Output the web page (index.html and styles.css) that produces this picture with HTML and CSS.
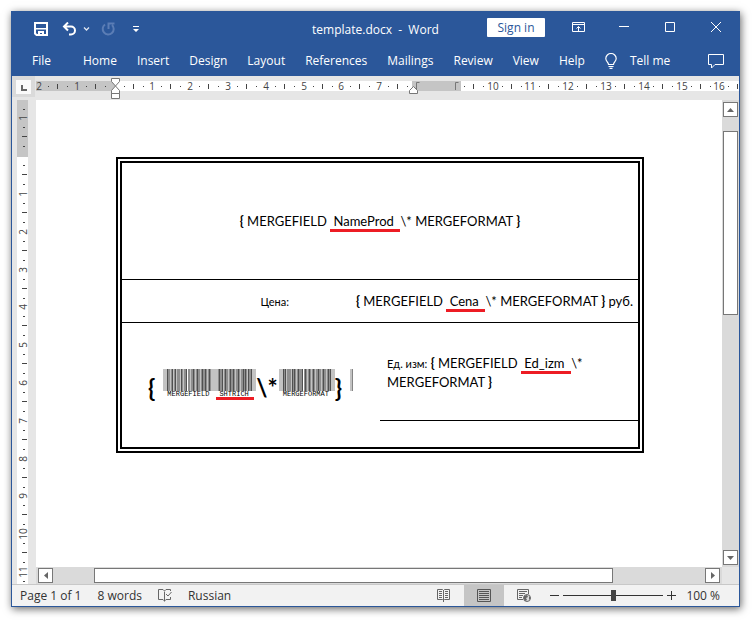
FILE: index.html
```html
<!DOCTYPE html>
<html lang="en">
<head>
<meta charset="utf-8">
<title>template.docx - Word</title>
<link rel="stylesheet" href="styles.css">
</head>
<body>
<div class="window">
  <header class="titlebar">
    <div class="quick">
      <button class="quick-btn" aria-label="Save"><svg width="14" height="14" viewBox="0 0 14 14"><path fill="none" stroke="#fff" stroke-width="2" d="M1 1h12v12H2.500L1 11.500z"/><path fill="#fff" d="M1 6h12v1.500H1zM4 9h6v4H8v-2H6v2H4z"/></svg></button>
      <button class="quick-btn" aria-label="Undo"><svg width="28" height="14" viewBox="0 0 28 14"><path fill="none" stroke="#fff" stroke-width="2" d="M6 .500L2 4.500l4 4M2 4.500h7a4 4 0 0 1 0 8H7"/><path fill="none" stroke="#dfe6f2" stroke-width="1.300" d="M22 5.500l2.500 2.500L27 5.500"/></svg></button>
      <button class="quick-btn repeat" aria-label="Repeat" disabled><svg width="14" height="14" viewBox="0 0 14 14"><path fill="none" stroke="#5b7db5" stroke-width="2" d="M4 2.500A5.500 5.500 0 1 0 11 3M7.500 7V1.500h6"/></svg></button>
      <button class="quick-btn customize" aria-label="Customize toolbar"><svg width="6" height="8" viewBox="0 0 6 8"><path fill="#fff" d="M0 1h6v1H0zM0 4h6L3 7z"/></svg></button>
    </div>
    <div class="doc-title">template.docx&nbsp; -&nbsp; Word</div>
    <div class="controls">
      <button class="signin">Sign in</button>
      <button class="control" aria-label="Ribbon options"><svg width="13" height="10" viewBox="0 0 13 10"><path fill="none" stroke="#fff" d="M.500.500h12v9H.500zM0 2.500h13M6.500 9V4.500M4.500 6.500l2-2 2 2"/></svg></button>
      <button class="control" aria-label="Minimize"><svg width="10" height="10" viewBox="0 0 10 10"><path stroke="#fff" d="M0 4.500h10"/></svg></button>
      <button class="control" aria-label="Maximize"><svg width="10" height="10" viewBox="0 0 10 10"><path fill="none" stroke="#fff" d="M.500.500h9v9h-9z"/></svg></button>
      <button class="control" aria-label="Close"><svg width="10" height="10" viewBox="0 0 10 10"><path stroke="#fff" d="M0 0l10 10M10 0L0 10"/></svg></button>
    </div>
  </header>
  <nav class="tabs">
    <button class="tab file">File</button>
    <button class="tab">Home</button>
    <button class="tab">Insert</button>
    <button class="tab">Design</button>
    <button class="tab">Layout</button>
    <button class="tab">References</button>
    <button class="tab">Mailings</button>
    <button class="tab">Review</button>
    <button class="tab">View</button>
    <button class="tab">Help</button>
    <button class="tab tell"><svg width="12" height="16" viewBox="0 0 12 16"><path fill="none" stroke="#fff" stroke-width="1.200" d="M3.500 11.500C3.500 9 .800 8.500.800 5.500a5.200 5 0 0 1 10.400 0c0 3-2.700 3.500-2.700 6zM3.500 13.500h5M4.500 15.400h3"/></svg>Tell me</button>
    <button class="tab comment" aria-label="Comments"><svg width="16" height="15" viewBox="0 0 16 15"><path fill="none" stroke="#fff" d="M.500.500h15v10H7l-3.500 3.500v-3.500h-3z"/></svg></button>
  </nav>

  <main class="workspace">
    <button class="tab-stop" aria-label="Left tab"><svg width="15" height="14" viewBox="0 0 15 14"><path fill="#fafafa" d="M0 0h15v14H0z"/><path fill="none" stroke="#666" stroke-width="2" d="M6 5v5h5"/></svg></button>
    <svg class="ruler-top" width="100%" height="24" aria-hidden="true">
      <defs>
        <path id="tick-x" fill="#444" d="M9 86h1v1H9zM18 84h1v5h-1zM28 86h1v1h-1z"/>
      </defs>
      <g transform="translate(-36 -76)">
        <rect x="36" y="81" width="3000" height="10" fill="#fff"/>
        <path fill="#c5c5c5" d="M36 81h79v10H36zM412 81h49v10h-49z"/>
        <use href="#tick-x" x="39"/><use href="#tick-x" x="77"/><use href="#tick-x" x="115"/><use href="#tick-x" x="152"/><use href="#tick-x" x="190"/><use href="#tick-x" x="228"/><use href="#tick-x" x="266"/><use href="#tick-x" x="304"/><use href="#tick-x" x="341"/><use href="#tick-x" x="379"/>
        <path fill="#444" d="M464 86h1v1h-1zM473 84h1v5h-1zM483 86h1v1h-1z"/>
        <use href="#tick-x" x="493"/><use href="#tick-x" x="530"/><use href="#tick-x" x="568"/><use href="#tick-x" x="606"/><use href="#tick-x" x="644"/><use href="#tick-x" x="682"/><use href="#tick-x" x="719"/>
        <path fill="none" stroke="#777" d="M416.500 90v-7.500h3M455.500 90v-7.500h3"/>
        <g class="marks">
          <text x="39" y="90">2</text><text x="77" y="90">1</text>
          <text x="152" y="90">1</text><text x="190" y="90">2</text><text x="228" y="90">3</text><text x="266" y="90">4</text><text x="304" y="90">5</text><text x="341" y="90">6</text><text x="379" y="90">7</text><text x="493" y="90">10</text><text x="530" y="90">11</text><text x="568" y="90">12</text><text x="606" y="90">13</text><text x="644" y="90">14</text><text x="682" y="90">15</text><text x="719" y="90">16</text>
        </g>
        <path fill="#fff" stroke="#777" d="M111.500 78.500h8v3l-4 4.500 4 4.500v3h-8v-3l4-4.500-4-4.500zM111.500 93.500h8v5h-8zM409.500 93.500v-3l4-4 4 4v3z"/>
      </g>
    </svg>
    <svg class="ruler-left" width="24" height="100%" aria-hidden="true">
      <defs>
        <path id="tick-y" fill="#444" d="M11 9h2v1h-2zM10 18h5v1h-5zM11 28h2v1h-2z"/>
      </defs>
      <g transform="translate(0 -100)">
        <rect x="5" y="100" width="11" height="3000" fill="#fff"/>
        <rect x="5" y="100" width="11" height="57" fill="#c5c5c5"/>
        <path fill="#444" d="M11 109h2v1h-2z"/>
        <use href="#tick-y" y="118"/><use href="#tick-y" y="156"/><use href="#tick-y" y="194"/><use href="#tick-y" y="232"/><use href="#tick-y" y="270"/><use href="#tick-y" y="307"/><use href="#tick-y" y="345"/><use href="#tick-y" y="383"/><use href="#tick-y" y="421"/><use href="#tick-y" y="459"/><use href="#tick-y" y="496"/><use href="#tick-y" y="534"/><use href="#tick-y" y="572"/>
        <g class="marks">
          <text transform="translate(15 118) rotate(-90)">1</text>
          <text transform="translate(15 194) rotate(-90)">1</text>
          <text transform="translate(15 232) rotate(-90)">2</text>
          <text transform="translate(15 270) rotate(-90)">3</text>
          <text transform="translate(15 307) rotate(-90)">4</text>
          <text transform="translate(15 345) rotate(-90)">5</text>
          <text transform="translate(15 383) rotate(-90)">6</text>
          <text transform="translate(15 421) rotate(-90)">7</text>
          <text transform="translate(15 459) rotate(-90)">8</text>
          <text transform="translate(15 496) rotate(-90)">9</text>
          <text transform="translate(15 534) rotate(-90)">10</text>
          <text transform="translate(15 572) rotate(-90)">11</text>
        </g>
      </g>
    </svg>

    <div class="page">
      <table class="label">
        <tbody>
          <tr class="name-row"><td colspan="2"><b>{</b> MERGEFIELD <span class="field">&nbsp;NameProd&nbsp;&nbsp;</span>\* MERGEFORMAT <b>}</b></td></tr>
          <tr class="price-row"><td colspan="2"><div class="price"><span class="small">Цена:</span><span><b>{</b> MERGEFIELD <span class="field">&nbsp;Cena&nbsp;&nbsp;</span>\* MERGEFORMAT <b>}</b> руб.</span></div></td></tr>
          <tr class="unit-row">
            <td rowspan="2" class="code-cell">
              <div class="code">
                <b class="brace">{</b>
                <div class="barcode first">
                  <svg width="93" height="22" viewBox="0 0 93 22" shape-rendering="crispEdges">
                    <path fill="#8f8f8f" d="M0 0h93v22H0z"/>
                    <path fill="#c3c3c3" d="M0 0h4v22H0zM7 0h1v22H7zM10 0h1v22h-1zM13 0h1v22h-1zM17 0h1v22h-1zM20 0h1v22h-1zM27 0h1v22h-1zM32 0h1v22h-1zM37 0h1v22h-1zM44 0h1v22h-1zM48 0h7v22h-7zM60 0h1v22h-1zM65 0h1v22h-1zM72 0h1v22h-1zM77 0h1v22h-1zM84 0h1v22h-1zM89 0h4v22h-4z"/>
                    <path fill="#fff" d="M24 0h1v22h-1z"/>
                    <path fill="#505050" d="M4 0h1v22H4zM9 0h1v22H9zM12 0h1v22h-1zM18 0h1v22h-1zM23 0h1v22h-1zM30 0h1v22h-1zM34 0h1v22h-1zM39 0h1v22h-1zM42 0h1v22h-1zM46 0h1v22h-1zM56 0h1v22h-1zM59 0h1v22h-1zM62 0h1v22h-1zM67 0h1v22h-1zM70 0h1v22h-1zM75 0h1v22h-1zM80 0h1v22h-1zM82 0h1v22h-1zM85 0h1v22h-1zM88 0h1v22h-1z"/>
                  </svg>
                  <div class="caption"><span>MERGEFIELD</span><span class="field">SHTRICH</span></div>
                </div>
                <b class="brace">\*</b>
                <div class="barcode">
                  <svg width="56" height="22" viewBox="0 0 56 22" shape-rendering="crispEdges">
                    <path fill="#8f8f8f" d="M0 0h56v22H0z"/>
                    <path fill="#c3c3c3" d="M0 0h4v22H0zM7 0h1v22H7zM12 0h1v22h-1zM17 0h1v22h-1zM28 0h1v22h-1zM32 0h1v22h-1zM36 0h1v22h-1zM42 0h1v22h-1zM47 0h1v22h-1zM52 0h4v22h-4z"/>
                    <path fill="#fff" d="M24 0h1v22h-1z"/>
                    <path fill="#505050" d="M4 0h1v22H4zM6 0h1v22H6zM13 0h1v22h-1zM15 0h1v22h-1zM19 0h1v22h-1zM23 0h1v22h-1zM26 0h1v22h-1zM30 0h1v22h-1zM34 0h1v22h-1zM39 0h1v22h-1zM44 0h1v22h-1zM49 0h1v22h-1zM51 0h1v22h-1z"/>
                  </svg>
                  <div class="caption">MERGEFORMAT</div>
                </div>
                <b class="brace">}</b>
                <div class="barcode tail"><svg width="3" height="22" viewBox="0 0 3 22"><path fill="#c3c3c3" d="M0 0h2v22H0z"/><path fill="#858585" d="M2 0h1v22H2z"/></svg></div>
              </div>
            </td>
            <td class="unit"><span class="small">Ед. изм:</span> <b>{</b> MERGEFIELD <span class="field">&nbsp;Ed_izm&nbsp;&nbsp;</span>\*<br>MERGEFORMAT <b>}</b></td>
          </tr>
          <tr class="blank-row"><td></td></tr>
        </tbody>
      </table>
    </div>

    <div class="vscroll">
      <button class="arrow" aria-label="Scroll up"><svg width="7" height="4" viewBox="0 0 7 4"><path fill="#666" d="M0 4h7L3.500 0z"/></svg></button>
      <div class="vtrack"><div class="vthumb"></div></div>
      <button class="arrow" aria-label="Scroll down"><svg width="7" height="4" viewBox="0 0 7 4"><path fill="#666" d="M0 0h7L3.500 4z"/></svg></button>
    </div>
    <div class="hscroll">
      <button class="arrow" aria-label="Scroll left"><svg width="4" height="7" viewBox="0 0 4 7"><path fill="#666" d="M4 0v7L0 3.500z"/></svg></button>
      <div class="htrack"><div class="hthumb"></div></div>
      <button class="arrow" aria-label="Scroll right"><svg width="4" height="7" viewBox="0 0 4 7"><path fill="#666" d="M0 0v7l4-3.500z"/></svg></button>
    </div>
  </main>

  <footer class="status">
    <span>Page 1 of 1</span>
    <span>8 words</span>
    <svg width="14" height="13" viewBox="0 0 14 13"><path fill="none" stroke="#666" d="M6.500 2.500v10M6.500 2L5 .500H.500v10H5l1.500 1.500L8 10.500h4.500V8M6.500 2L8 .500h4.500V2M8 5l2 2 3.500-4"/></svg>
    <span>Russian</span>
    <div class="views">
      <button class="view" aria-label="Read mode"><svg width="14" height="13" viewBox="0 0 14 13"><path fill="none" stroke="#666" d="M6.500 1.500L5.500.500h-5v10h5l1 1 1-1h5v-10h-5zM6.500 1v12M2 2.500h3M2 4.500h3M2 6.500h3M2 8.500h3M8 2.500h3M8 4.500h3M8 6.500h3M8 8.500h3"/></svg></button>
      <button class="view active" aria-label="Print layout"><svg width="14" height="13" viewBox="0 0 14 13"><path fill="none" stroke="#555" d="M.500.500h13v12H.500zM2 2.500h10M2 4.500h10M2 6.500h10M2 8.500h10M2 10.500h10"/></svg></button>
      <button class="view" aria-label="Web layout"><svg width="14" height="13" viewBox="0 0 14 13"><path fill="none" stroke="#666" d="M6 10.500H.500V.500h11V5M2 2.500h8M2 4.500h6M2 6.500h4M2 8.500h3"/><circle cx="10" cy="9" r="3.500" fill="#ddd" stroke="#666"/><path fill="#666" d="M7 7l3-1 1 2-2 1 1 2-2 1-1-2zM12 7l1.500 2-1.500 2z"/></svg></button>
    </div>
    <div class="zoom">
      <button class="step" aria-label="Zoom out"><svg width="9" height="9" viewBox="0 0 9 9"><path stroke="#333" d="M0 4.500h9"/></svg></button>
      <input type="range" min="0" max="100" value="50" aria-label="Zoom">
      <button class="step" aria-label="Zoom in"><svg width="9" height="9" viewBox="0 0 9 9"><path stroke="#333" d="M0 4.500h9M4.500 0v9"/></svg></button>
    </div>
    <span class="percent">100 %</span>
  </footer>
</div>
</body>
</html>
```
FILE: styles.css
```css
* { box-sizing: border-box; }

body {
  margin: 0;
  min-height: 100vh;
  padding: 11px 12px 13px 11px;
  display: flex;
  background: #fff;
  color: #333;
  font: 12px/16px "Open Sans", "Noto Sans", sans-serif;
}

button {
  display: flex;
  align-items: center;
  justify-content: center;
  margin: 0;
  padding: 0;
  border: 0;
  background: none;
  color: inherit;
  font: inherit;
}

svg { display: block; flex: none; }

.window {
  flex: 1;
  min-width: 0;
  display: flex;
  flex-direction: column;
  border: 1px solid #2b579a;
  box-shadow: 1px 2px 8px rgba(0, 0, 0, .6);
}

/* Title bar */
.titlebar {
  display: grid;
  grid-template-columns: 1fr auto 1fr;
  height: 34px;
  background: #2b579a;
  color: #fff;
}
.quick { display: flex; align-items: center; gap: 14px; padding-left: 22px; }
.quick .repeat { margin-left: -3px; }
.customize { margin-left: 4px; }
.doc-title { padding-top: 10px; }
.controls { display: flex; justify-content: flex-end; align-items: flex-start; }
.signin {
  width: 58px;
  height: 19px;
  margin: 6px 10px 0 0;
  border-radius: 1px;
  background: #fff;
  color: #2b579a;
}
.control { width: 46px; height: 30px; }

/* Ribbon tabs */
.tabs {
  display: flex;
  align-items: center;
  gap: 20px;
  height: 30px;
  padding: 0 15px 0 20px;
  background: #2b579a;
  color: #fff;
}
.file { margin-right: 12px; }
.tell { gap: 13px; }
.comment { margin-left: auto; }

/* Rulers, page and scroll bars */
.workspace {
  flex: 1;
  display: grid;
  grid-template-columns: 24px 1fr 17px;
  grid-template-rows: 24px 1fr 17px;
  background: #e6e6e6;
}
.tab-stop { height: 21px; width: 23px; background: #dadada; }
.ruler-top { grid-column: 2 / 4; overflow: hidden; }
.ruler-left { grid-row: 2 / 4; height: 100%; min-height: 0; overflow: hidden; }
.marks { fill: #444; font-size: 10px; text-anchor: middle; }
.page { padding: 57px 78px 20px 80px; background: #fff; }

.label {
  width: 100%;
  border: 6px double #000;
  border-spacing: 0;
  table-layout: fixed;
  color: #000;
  font: 13px/18px Lato, "Open Sans", sans-serif;
}
.label td { padding: 0; width: 50%; border-bottom: 1px solid #000; }
.name-row td { height: 117px; text-align: center; }
.price-row td { height: 43px; }
.price { display: flex; justify-content: flex-end; align-items: baseline; gap: 67px; padding-right: 5px; }
.small { font-size: 11px; }
.field { border-bottom: 3px solid #ed1c24; }
.label .unit { height: 98px; padding: 1px 0 0 7px; }
.blank-row td { height: 26px; }
.label .code-cell, .label .blank-row td { border-bottom: 0; }

.code { display: flex; align-items: flex-start; padding: 0 0 2px 26px; }
.brace { padding-top: 7px; font-size: 24px; line-height: 24px; }
.barcode { margin-left: 1px; }
.first { margin-left: 8px; }
.tail { margin-left: 8px; }
.caption {
  display: flex;
  padding-left: 4px;
  font: 7px/6px "Liberation Mono", monospace;
}
.caption .field { margin-left: 7px; padding: 0 5px 0 3px; }

.arrow { width: 15px; height: 15px; border: 1px solid #777; background: #fff; }
.vscroll { display: flex; flex-direction: column; padding: 2px 1px; background: #dadada; }
.vtrack { flex: 1; padding-top: 14px; }
.vthumb { width: 15px; height: 44%; border: 1px solid #777; background: #fff; }
.hscroll { display: flex; grid-column: 2; padding: 1px 2px; background: #dadada; }
.htrack { flex: 1; padding-left: 41px; }
.hthumb { width: 85%; height: 15px; border: 1px solid #777; background: #fff; }

/* Status bar */
.status {
  display: flex;
  align-items: center;
  gap: 16px;
  height: 22px;
  padding: 0 19px 0 8px;
  border-top: 1px solid #c8c8c8;
  background: #f2f2f2;
}
.views { display: flex; align-self: stretch; margin-left: auto; }
.view { width: 40px; }
.view.active { background: #c5c5c5; }
.zoom { display: flex; align-items: center; gap: 4px; margin-left: -10px; }
.zoom input {
  appearance: none;
  width: 100px;
  height: 12px;
  margin: 0;
  background: linear-gradient(#333, #333) center / 100% 1px no-repeat;
}
.zoom input::-webkit-slider-thumb { appearance: none; width: 5px; height: 11px; background: #444; }
.percent { margin-left: -6px; }
```
